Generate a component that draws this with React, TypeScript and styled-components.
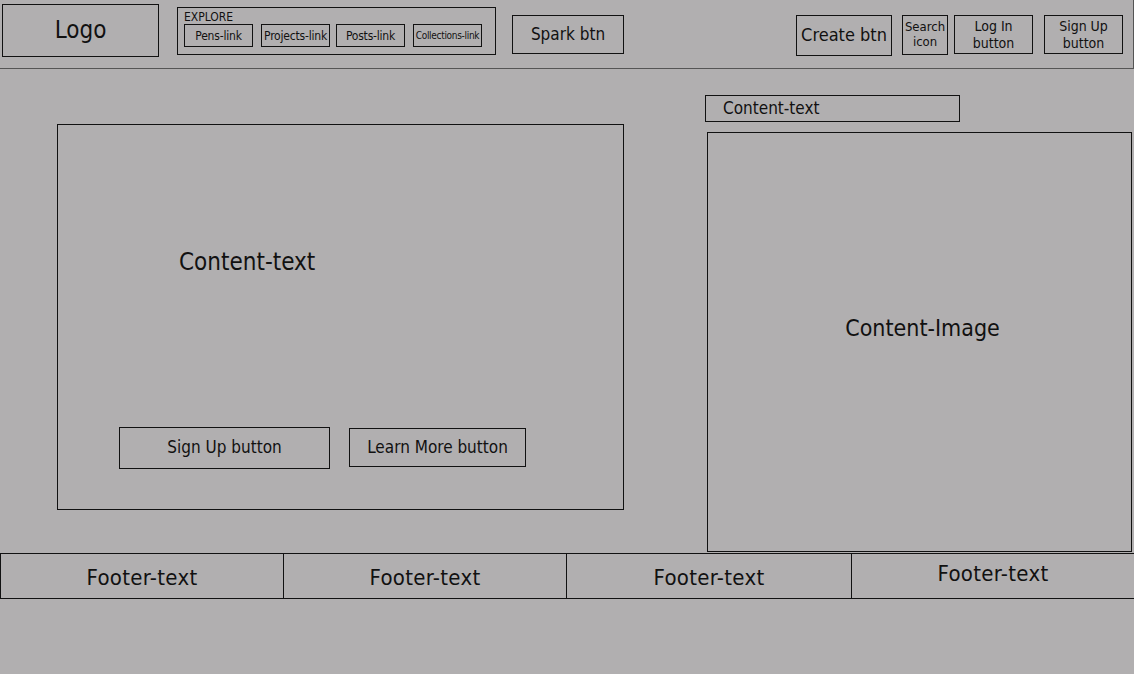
import React from "react";
import styled, { createGlobalStyle } from "styled-components";

const GlobalStyle = createGlobalStyle`
  html, body {
    margin: 0;
    padding: 0;
    background: #b1afb0;
  }
  body {
    font-family: "DejaVu Sans Condensed", "DejaVu Sans", sans-serif;
    color: #111;
  }
`;

const Page = styled.div`
  width: 1134px;
  height: 674px;
  background: #b1afb0;
  overflow: hidden;
`;

const Header = styled.header`
  display: flex;
  align-items: flex-start;
  height: 69px;
  box-sizing: border-box;
  border-bottom: 1px solid #555;
  border-right: 1px solid #555;
  padding-left: 2px;
`;

const Box = styled.div<{
  $w: number;
  $h: number;
  $top?: number;
  $left?: number;
  $size?: number;
}>`
  display: flex;
  align-items: center;
  justify-content: center;
  box-sizing: border-box;
  width: ${(p) => p.$w}px;
  height: ${(p) => p.$h}px;
  margin-top: ${(p) => p.$top ?? 0}px;
  margin-left: ${(p) => p.$left ?? 0}px;
  border: 1px solid #111;
  font-size: ${(p) => p.$size ?? 16}px;
  text-align: center;
  line-height: 1.15;
`;

const Explore = styled.div`
  box-sizing: border-box;
  width: 319px;
  height: 48px;
  margin-top: 7px;
  margin-left: 18px;
  border: 1px solid #111;
  padding: 3px 0 0 6px;
`;

const ExploreLabel = styled.div`
  font-size: 12px;
  line-height: 13px;
`;

const LinkRow = styled.div`
  display: flex;
`;

const NavLink = styled.div<{ $gap: number; $size?: number }>`
  display: flex;
  align-items: center;
  justify-content: center;
  box-sizing: border-box;
  width: 69px;
  height: 23px;
  margin-left: ${(p) => p.$gap}px;
  border: 1px solid #111;
  font-size: ${(p) => p.$size ?? 12}px;
  white-space: nowrap;
  letter-spacing: ${(p) => (p.$size && p.$size < 12 ? "-0.3px" : "-0.2px")};
`;

const Spacer = styled.div`
  flex: 1;
`;

const EdgeGap = styled.div`
  width: 10px;
`;

const Main = styled.main`
  display: flex;
  align-items: flex-start;
  height: 484px;
`;

const HeroBox = styled.section`
  box-sizing: border-box;
  width: 567px;
  height: 386px;
  margin-top: 55px;
  margin-left: 57px;
  border: 1px solid #111;
  padding: 123px 0 0 121px;
  display: flex;
  flex-direction: column;
`;

const HeroText = styled.div`
  font-size: 24px;
  line-height: 28px;
`;

const ButtonRow = styled.div`
  display: flex;
  align-items: flex-start;
  margin-top: 151px;
  margin-left: -60px;
  gap: 19px;
`;

const SideColumn = styled.div`
  display: flex;
  flex-direction: column;
  margin-left: 81px;
  margin-top: 26px;
`;

const Caption = styled.div`
  box-sizing: border-box;
  width: 255px;
  height: 27px;
  border: 1px solid #111;
  padding-left: 17px;
  font-size: 17px;
  line-height: 25px;
`;

const ImageBox = styled.div`
  box-sizing: border-box;
  width: 425px;
  height: 420px;
  margin-top: 10px;
  margin-left: 2px;
  border: 1px solid #111;
  display: flex;
  align-items: center;
  justify-content: center;
  padding-bottom: 28px;
  padding-left: 6px;
  font-size: 23px;
`;

const Footer = styled.footer`
  display: flex;
  box-sizing: border-box;
  height: 46px;
  border-top: 1px solid #111;
  border-bottom: 1px solid #111;
`;

const FooterCell = styled.div<{ $w: number; $raise?: boolean; $first?: boolean }>`
  box-sizing: border-box;
  width: ${(p) => p.$w}px;
  display: flex;
  align-items: center;
  justify-content: center;
  border-left: 1px solid #111;
  font-size: 22px;
  letter-spacing: 0.3px;
  padding-top: ${(p) => (p.$raise ? 0 : 2)}px;
  padding-bottom: ${(p) => (p.$raise ? 6 : 0)}px;
`;

const App: React.FC = () => {
  return (
    <Page>
      <GlobalStyle />
      <Header>
        <Box $w={157} $h={53} $top={4} $size={24}>
          Logo
        </Box>
        <Explore>
          <ExploreLabel>EXPLORE</ExploreLabel>
          <LinkRow>
            <NavLink $gap={0}>Pens-link</NavLink>
            <NavLink $gap={8}>Projects-link</NavLink>
            <NavLink $gap={6}>Posts-link</NavLink>
            <NavLink $gap={8} $size={10}>
              Collections-link
            </NavLink>
          </LinkRow>
        </Explore>
        <Box $w={112} $h={39} $top={15} $left={16} $size={17}>
          Spark btn
        </Box>
        <Spacer />
        <Box $w={96} $h={41} $top={15} $size={18}>
          Create btn
        </Box>
        <Box $w={46} $h={40} $top={15} $left={10} $size={13}>
          Search
          <br />
          icon
        </Box>
        <Box $w={79} $h={39} $top={15} $left={6} $size={14}>
          Log In
          <br />
          button
        </Box>
        <Box $w={79} $h={39} $top={15} $left={11} $size={14}>
          Sign Up
          <br />
          button
        </Box>
        <EdgeGap />
      </Header>

      <Main>
        <HeroBox>
          <HeroText>Content-text</HeroText>
          <ButtonRow>
            <Box $w={211} $h={42} $size={17}>
              Sign Up button
            </Box>
            <Box $w={177} $h={39} $top={1} $size={17}>
              Learn More button
            </Box>
          </ButtonRow>
        </HeroBox>
        <SideColumn>
          <Caption>Content-text</Caption>
          <ImageBox>Content-Image</ImageBox>
        </SideColumn>
      </Main>

      <Footer>
        <FooterCell $w={283}>Footer-text</FooterCell>
        <FooterCell $w={283}>Footer-text</FooterCell>
        <FooterCell $w={285}>Footer-text</FooterCell>
        <FooterCell $w={283} $raise>
          Footer-text
        </FooterCell>
      </Footer>
    </Page>
  );
};

export default App;
